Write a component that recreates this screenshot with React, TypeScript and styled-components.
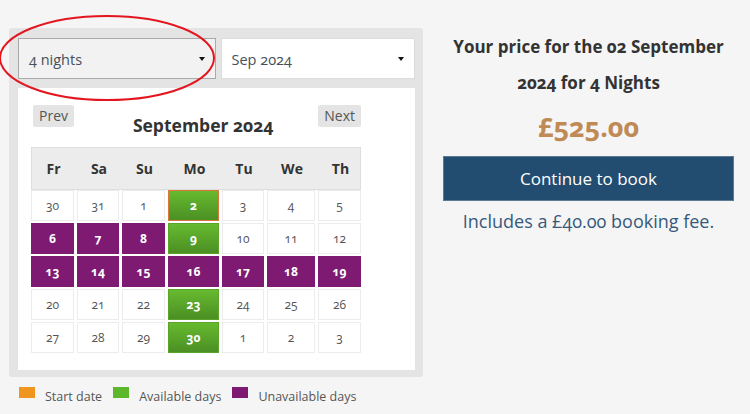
import * as React from "react";
import styled, { createGlobalStyle, css } from "styled-components";

const GlobalStyle = createGlobalStyle`
  html, body {
    margin: 0;
    padding: 0;
    background: #f5f5f5;
    font-family: "Open Sans", "Noto Sans", sans-serif;
    font-variant-numeric: oldstyle-nums;
  }
`;

type DayKind = "plain" | "start" | "available" | "unavailable";

interface Day {
  n: number;
  kind: DayKind;
}

const COLS = "43px 42px 43px 51px 42px 48px 43px";

const weekdays = ["Fr", "Sa", "Su", "Mo", "Tu", "We", "Th"];

const rows: Day[][] = [
  [
    { n: 30, kind: "plain" },
    { n: 31, kind: "plain" },
    { n: 1, kind: "plain" },
    { n: 2, kind: "start" },
    { n: 3, kind: "plain" },
    { n: 4, kind: "plain" },
    { n: 5, kind: "plain" },
  ],
  [
    { n: 6, kind: "unavailable" },
    { n: 7, kind: "unavailable" },
    { n: 8, kind: "unavailable" },
    { n: 9, kind: "available" },
    { n: 10, kind: "plain" },
    { n: 11, kind: "plain" },
    { n: 12, kind: "plain" },
  ],
  [
    { n: 13, kind: "unavailable" },
    { n: 14, kind: "unavailable" },
    { n: 15, kind: "unavailable" },
    { n: 16, kind: "unavailable" },
    { n: 17, kind: "unavailable" },
    { n: 18, kind: "unavailable" },
    { n: 19, kind: "unavailable" },
  ],
  [
    { n: 20, kind: "plain" },
    { n: 21, kind: "plain" },
    { n: 22, kind: "plain" },
    { n: 23, kind: "available" },
    { n: 24, kind: "plain" },
    { n: 25, kind: "plain" },
    { n: 26, kind: "plain" },
  ],
  [
    { n: 27, kind: "plain" },
    { n: 28, kind: "plain" },
    { n: 29, kind: "plain" },
    { n: 30, kind: "available" },
    { n: 1, kind: "plain" },
    { n: 2, kind: "plain" },
    { n: 3, kind: "plain" },
  ],
];

const Page = styled.div`
  display: flex;
  gap: 20px;
  padding: 28px 0 0 9px;
  width: 750px;
  height: 414px;
  box-sizing: border-box;
  overflow: hidden;
`;

const LeftColumn = styled.div`
  position: relative;
  width: 414px;
`;

const Panel = styled.div`
  background: #e4e4e4;
  border-radius: 3px;
  padding: 10px 8px 9px 9px;
  box-sizing: border-box;
  height: 349px;
`;

const Selects = styled.div`
  display: flex;
  gap: 5px;
  margin-bottom: 9px;
`;

const Select = styled.div<{ $focused?: boolean }>`
  display: flex;
  align-items: center;
  justify-content: space-between;
  box-sizing: border-box;
  height: 41px;
  padding: 2px 10px 0 10px;
  font-size: 14.5px;
  color: #46505a;
  background: ${(p) => (p.$focused ? "#f2f2f2" : "#ffffff")};
  border: 1px solid ${(p) => (p.$focused ? "#a9a9a9" : "#dcdcdc")};
  width: ${(p) => (p.$focused ? "198px" : "195px")};
`;

const Caret = styled.span`
  width: 0;
  height: 0;
  border-left: 3px solid transparent;
  border-right: 3px solid transparent;
  border-top: 4px solid #111;
  margin-top: -2px;
`;

const CalendarBox = styled.div`
  background: #ffffff;
  height: 282px;
  box-sizing: border-box;
  padding: 17px 0 0 13px;
  width: 397px;
`;

const CalHead = styled.div`
  display: flex;
  align-items: flex-start;
  justify-content: space-between;
  width: 328px;
  padding-left: 2px;
  height: 42px;
`;

const NavButton = styled.button`
  font-family: inherit;
  font-size: 14px;
  color: #555;
  background: #e4e4e4;
  border: none;
  border-radius: 2px;
  height: 22px;
  padding: 0 6px;
  line-height: 22px;
  cursor: pointer;
`;

const MonthTitle = styled.div`
  font-size: 17.5px;
  font-weight: 700;
  color: #333;
  margin-top: 8px;
  margin-left: 14px;
`;

const WeekHeader = styled.div`
  display: grid;
  grid-template-columns: ${COLS};
  column-gap: 3px;
  width: 330px;
  height: 43px;
  box-sizing: border-box;
  background: #ececec;
  border: 1px solid #dedede;
  align-items: center;
`;

const WeekDay = styled.div`
  text-align: center;
  font-size: 14px;
  font-weight: 700;
  color: #333;
`;

const DayGrid = styled.div`
  display: grid;
  grid-template-columns: ${COLS};
  grid-auto-rows: 31px;
  gap: 2px 3px;
  width: 330px;
`;

const kindStyles: Record<DayKind, ReturnType<typeof css>> = {
  plain: css`
    background: #ffffff;
    border: 1px solid #ececec;
    color: #555;
    font-weight: 400;
  `,
  start: css`
    background: linear-gradient(#67ba2f, #4b8f24);
    border: 1px solid #d9783a;
    color: #fff;
    font-weight: 700;
  `,
  available: css`
    background: linear-gradient(#67ba2f, #4b8f24);
    border: 1px solid #5aa42a;
    color: #fff;
    font-weight: 700;
  `,
  unavailable: css`
    background: #7e1a72;
    border: 1px solid #7e1a72;
    color: #fff;
    font-weight: 700;
  `,
};

const DayCell = styled.div<{ $kind: DayKind }>`
  box-sizing: border-box;
  display: flex;
  align-items: center;
  justify-content: center;
  font-size: 12px;
  ${(p) => kindStyles[p.$kind]}
`;

const Legend = styled.div`
  display: flex;
  align-items: center;
  padding: 11px 0 0 10px;
  font-size: 12.5px;
  color: #555;
`;

const Swatch = styled.span<{ $color: string }>`
  display: inline-block;
  width: 16px;
  height: 11px;
  background: ${(p) => p.$color};
  margin-right: 10px;
  margin-top: -8px;
`;

const LegendLabel = styled.span`
  margin-right: 11px;
`;

const Annotation = styled.svg`
  position: absolute;
  left: -12px;
  top: -14px;
  pointer-events: none;
`;

const RightColumn = styled.div`
  width: 291px;
  text-align: center;
  padding-top: 1px;
`;

const PriceLead = styled.div`
  font-size: 17px;
  font-weight: 700;
  color: #333;
  line-height: 36px;
`;

const Price = styled.div`
  font-size: 27px;
  font-weight: 700;
  color: #c08a55;
  line-height: 34px;
  margin-top: 9px;
`;

const BookButton = styled.button`
  display: block;
  width: 291px;
  height: 45px;
  margin-top: 12px;
  border: 1px solid #5b7894;
  background: #224c70;
  color: #fff;
  font-family: inherit;
  font-size: 17px;
  cursor: pointer;
`;

const Fee = styled.div`
  margin-top: 8px;
  font-size: 18px;
  color: #365a7c;
`;

export default function App() {
  return (
    <>
      <GlobalStyle />
      <Page>
        <LeftColumn>
          <Panel>
            <Selects>
              <Select $focused>
                <span>4 nights</span>
                <Caret />
              </Select>
              <Select>
                <span>Sep 2024</span>
                <Caret />
              </Select>
            </Selects>
            <CalendarBox>
              <CalHead>
                <NavButton>Prev</NavButton>
                <MonthTitle>September 2024</MonthTitle>
                <NavButton>Next</NavButton>
              </CalHead>
              <WeekHeader>
                {weekdays.map((d) => (
                  <WeekDay key={d}>{d}</WeekDay>
                ))}
              </WeekHeader>
              <DayGrid>
                {rows.flat().map((d, i) => (
                  <DayCell key={i} $kind={d.kind}>
                    {d.n}
                  </DayCell>
                ))}
              </DayGrid>
            </CalendarBox>
          </Panel>
          <Legend>
            <Swatch $color="#f0961f" />
            <LegendLabel>Start date</LegendLabel>
            <Swatch $color="#5cb82a" />
            <LegendLabel>Available days</LegendLabel>
            <Swatch $color="#7e1a72" />
            <LegendLabel>Unavailable days</LegendLabel>
          </Legend>
          <Annotation width="230" height="90" viewBox="0 0 230 90">
            <ellipse
              cx="110"
              cy="44"
              rx="107"
              ry="42"
              fill="none"
              stroke="#e3161f"
              strokeWidth="2"
            />
          </Annotation>
        </LeftColumn>
        <RightColumn>
          <PriceLead>
            Your price for the 02 September
            <br />
            2024 for 4 Nights
          </PriceLead>
          <Price>£525.00</Price>
          <BookButton>Continue to book</BookButton>
          <Fee>Includes a £40.00 booking fee.</Fee>
        </RightColumn>
      </Page>
    </>
  );
}
